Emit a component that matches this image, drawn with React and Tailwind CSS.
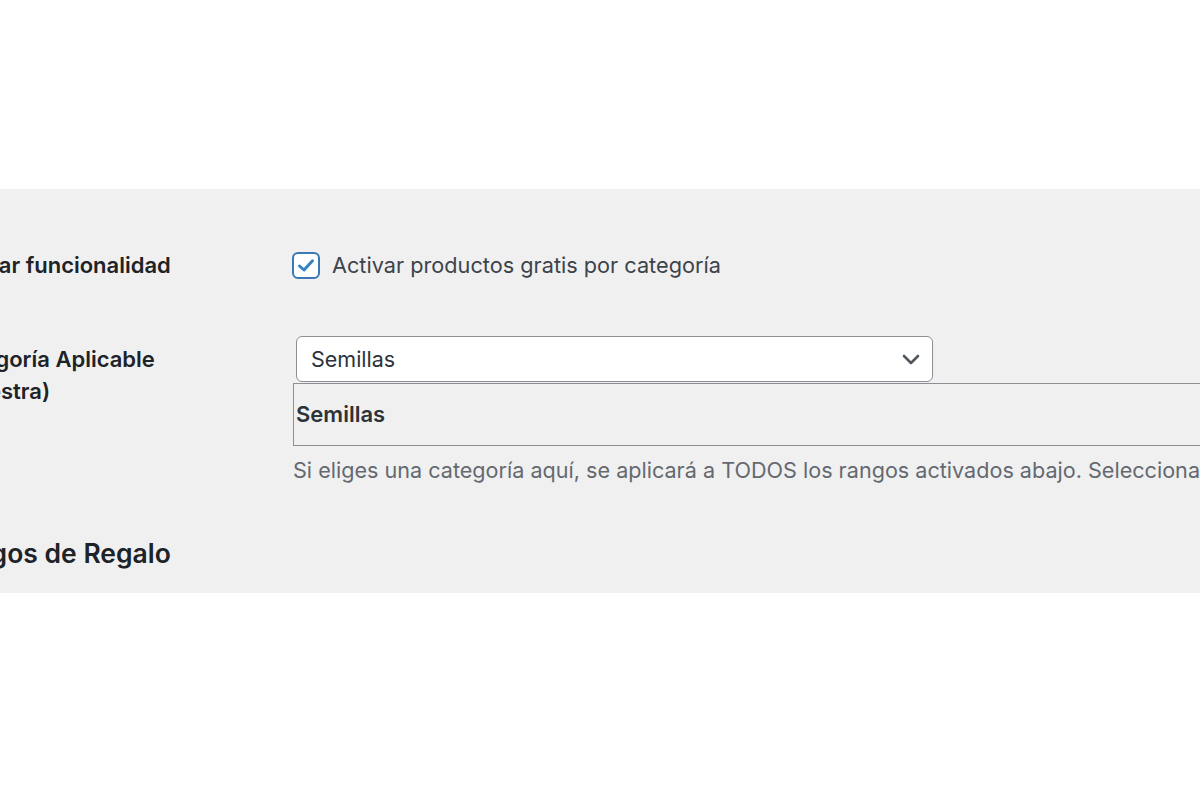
export default function App() {
  const font = { fontFamily: "Inter, 'Noto Sans', 'Liberation Sans', sans-serif" };
  return (
    <div className="w-[1200px] h-[800px] bg-white overflow-hidden" style={font}>
      <div className="h-[189px]" />
      <div className="h-[404px] bg-[#f0f0f1] overflow-hidden">
        <div className="grid grid-cols-[293px_minmax(0,1fr)] pt-[62px]">
          {/* Row 1 */}
          <div className="overflow-hidden flex items-center h-[28px]">
            <div className="-ml-[56px] whitespace-nowrap text-[22px] font-semibold text-[#1d2327] leading-[32px]">
              Activar funcionalidad
            </div>
          </div>
          <div className="flex items-center h-[28px] -ml-px">
            <span className="w-[28px] h-[27px] rounded-[6px] border-[2.5px] border-[#3a78b6] bg-white flex items-center justify-center">
              <svg width="18" height="15" viewBox="0 0 18 15" fill="none">
                <path d="M2.5 8 L7 12 L15.5 2.8" stroke="#3582c4" strokeWidth="3" strokeLinecap="round" strokeLinejoin="round" />
              </svg>
            </span>
            <span className="ml-[12px] text-[21.7px] text-[#3c434a] whitespace-nowrap">Activar productos gratis por categoría</span>
          </div>

          {/* Row 2 */}
          <div className="overflow-hidden mt-[57px] pt-[7px]">
            <div className="-ml-[54px] whitespace-nowrap text-[22px] font-semibold text-[#1d2327] leading-[32px]">
              Categoría Aplicable
              <br />
              (Muestra)
            </div>
          </div>
          <div className="mt-[57px] flex flex-col">
            <div className="ml-[3px] w-[637px] h-[46px] bg-white border border-[#8c8f94] rounded-[6px] flex items-center justify-between pl-[14px] pr-[12px]">
              <span className="text-[21.5px] text-[#2c3338]">Semillas</span>
              <svg width="18" height="11" viewBox="0 0 18 11" fill="none">
                <path d="M2 2 L9 9 L16 2" stroke="#50575e" strokeWidth="2.6" strokeLinecap="round" strokeLinejoin="round" />
              </svg>
            </div>
            <div className="mt-px h-[63px] border-l-[1.5px] border-t-[1.5px] border-b-[1.5px] border-[#8c8f94] flex items-center pl-[2px]">
              <span className="text-[22px] font-semibold text-[#2c3338]">Semillas</span>
            </div>
            <p className="mt-[10px] text-[21.6px] leading-[28px] text-[#646970] whitespace-nowrap">
              Si eliges una categoría aquí, se aplicará a TODOS los rangos activados abajo. Selecciona "Ninguna" para configurar cada rango por separado.
            </p>
          </div>
        </div>
        <div className="overflow-hidden mt-[51px] h-[36px] flex items-center">
          <h2 className="-ml-[58px] whitespace-nowrap text-[26.5px] font-semibold text-[#1d2327] leading-[36px]">
            Rangos de Regalo
          </h2>
        </div>
      </div>
    </div>
  );
}
